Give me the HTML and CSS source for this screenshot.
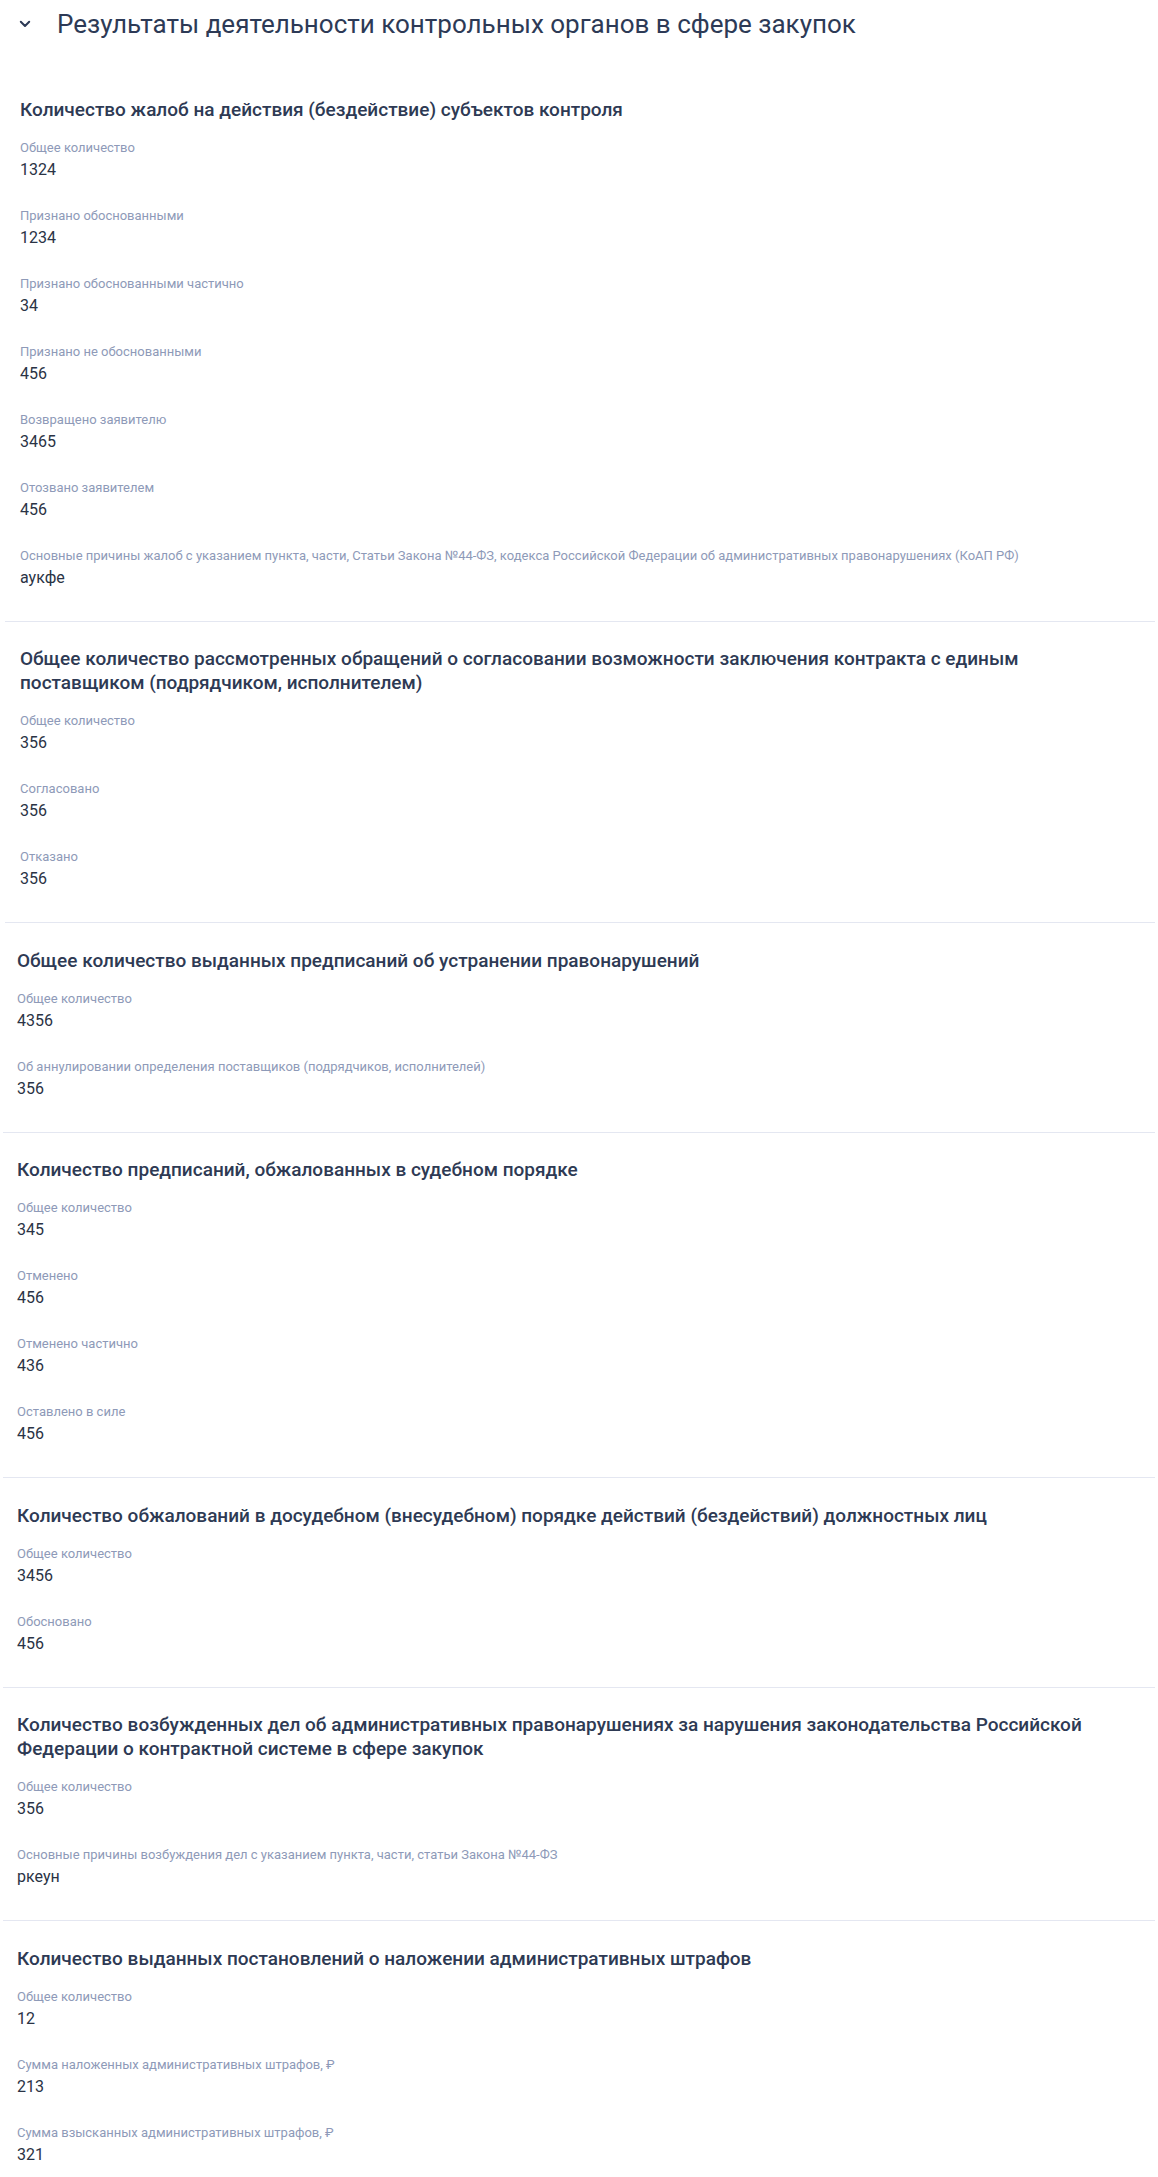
FILE: index.html
```html
<!DOCTYPE html>
<html lang="ru">
<head>
<meta charset="utf-8">
<title>Результаты деятельности контрольных органов в сфере закупок</title>
<link rel="stylesheet" href="styles.css">
</head>
<body>
<div class="page">
  <div class="header">
    <span class="chevron">
      <svg width="12" height="8" viewBox="0 0 12 8"><path d="M1.8 1.8 L6 6 L10.2 1.8" fill="none" stroke="#2d3a56" stroke-width="2" stroke-linecap="round" stroke-linejoin="round"/></svg>
    </span>
    <h1 class="title">Результаты деятельности контрольных органов в сфере закупок</h1>
  </div>

  <div class="sections">
    <section class="block block--wide">
      <h2 class="block-title">Количество жалоб на действия (бездействие) субъектов контроля</h2>
      <div class="fields">
        <div class="field"><div class="label">Общее количество</div><div class="value">1324</div></div>
        <div class="field"><div class="label">Признано обоснованными</div><div class="value">1234</div></div>
        <div class="field"><div class="label">Признано обоснованными частично</div><div class="value">34</div></div>
        <div class="field"><div class="label">Признано не обоснованными</div><div class="value">456</div></div>
        <div class="field"><div class="label">Возвращено заявителю</div><div class="value">3465</div></div>
        <div class="field"><div class="label">Отозвано заявителем</div><div class="value">456</div></div>
        <div class="field"><div class="label">Основные причины жалоб с указанием пункта, части, Статьи Закона №44-ФЗ, кодекса Российской Федерации об административных правонарушениях (КоАП РФ)</div><div class="value">аукфе</div></div>
      </div>
    </section>

    <section class="block block--wide">
      <h2 class="block-title">Общее количество рассмотренных обращений о согласовании возможности заключения контракта с единым поставщиком (подрядчиком, исполнителем)</h2>
      <div class="fields">
        <div class="field"><div class="label">Общее количество</div><div class="value">356</div></div>
        <div class="field"><div class="label">Согласовано</div><div class="value">356</div></div>
        <div class="field"><div class="label">Отказано</div><div class="value">356</div></div>
      </div>
    </section>

    <section class="block">
      <h2 class="block-title">Общее количество выданных предписаний об устранении правонарушений</h2>
      <div class="fields">
        <div class="field"><div class="label">Общее количество</div><div class="value">4356</div></div>
        <div class="field"><div class="label">Об аннулировании определения поставщиков (подрядчиков, исполнителей)</div><div class="value">356</div></div>
      </div>
    </section>

    <section class="block">
      <h2 class="block-title">Количество предписаний, обжалованных в судебном порядке</h2>
      <div class="fields">
        <div class="field"><div class="label">Общее количество</div><div class="value">345</div></div>
        <div class="field"><div class="label">Отменено</div><div class="value">456</div></div>
        <div class="field"><div class="label">Отменено частично</div><div class="value">436</div></div>
        <div class="field"><div class="label">Оставлено в силе</div><div class="value">456</div></div>
      </div>
    </section>

    <section class="block">
      <h2 class="block-title">Количество обжалований в досудебном (внесудебном) порядке действий (бездействий) должностных лиц</h2>
      <div class="fields">
        <div class="field"><div class="label">Общее количество</div><div class="value">3456</div></div>
        <div class="field"><div class="label">Обосновано</div><div class="value">456</div></div>
      </div>
    </section>

    <section class="block">
      <h2 class="block-title">Количество возбужденных дел об административных правонарушениях за нарушения законодательства Российской Федерации о контрактной системе в сфере закупок</h2>
      <div class="fields">
        <div class="field"><div class="label">Общее количество</div><div class="value">356</div></div>
        <div class="field"><div class="label">Основные причины возбуждения дел с указанием пункта, части, статьи Закона №44-ФЗ</div><div class="value">ркеун</div></div>
      </div>
    </section>

    <section class="block block--last">
      <h2 class="block-title">Количество выданных постановлений о наложении административных штрафов</h2>
      <div class="fields">
        <div class="field"><div class="label">Общее количество</div><div class="value">12</div></div>
        <div class="field"><div class="label">Сумма наложенных административных штрафов, ₽</div><div class="value">213</div></div>
        <div class="field"><div class="label">Сумма взысканных административных штрафов, ₽</div><div class="value">321</div></div>
      </div>
    </section>
  </div>
</div>
</body>
</html>
```

FILE: styles.css
```css
* { box-sizing: border-box; }

html, body {
  margin: 0;
  padding: 0;
  background: #ffffff;
}

body {
  font-family: Roboto, "Noto Sans", "Liberation Sans", sans-serif;
  color: #2a3345;
}

.page {
  padding: 8px 3px 0 3px;
}

.header {
  display: flex;
  align-items: center;
  gap: 20px;
  padding-left: 10px;
}

.chevron {
  width: 24px;
  height: 24px;
  display: flex;
  align-items: center;
  justify-content: center;
  flex: none;
}

.chevron svg { display: block; }

.title {
  margin: 0;
  font-size: 26px;
  line-height: 32px;
  font-weight: 400;
  color: #2d3a56;
}

.sections {
  margin-top: 32px;
}

.block {
  padding: 25.5px 14px 32px 14px;
  border-bottom: 1px solid #e4e7f1;
}

.block--wide {
  margin-left: 2px;
  padding-left: 15px;
}

.block--last {
  border-bottom: none;
}

.block-title {
  margin: 0 0 17px 0;
  font-size: 19px;
  line-height: 24px;
  font-weight: 500;
  color: #2e3a54;
  max-width: 1100px;
}

.fields {
  display: flex;
  flex-direction: column;
  gap: 26px;
}

.field {
  display: flex;
  flex-direction: column;
  gap: 2px;
}

.label {
  font-size: 13px;
  line-height: 18px;
  color: #8e9ab8;
}

.value {
  font-size: 16px;
  line-height: 22px;
  color: #2a3345;
}
```
